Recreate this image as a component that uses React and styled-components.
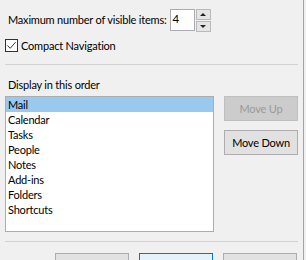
import React from 'react'
import styled, { createGlobalStyle } from 'styled-components'

const GlobalStyle = createGlobalStyle`
    html, body {
        margin: 0;
        padding: 0;
        background: #f0f0f0;
    }
    body {
        font-family: "Segoe UI", Lato, "Noto Sans", sans-serif;
        font-size: 11px;
        letter-spacing: -0.2px;
        color: #000;
    }
`

const items = ['Mail', 'Calendar', 'Tasks', 'People', 'Notes', 'Add-ins', 'Folders', 'Shortcuts']

// Marco del diálogo recortado (borde derecho de la ventana visible)
const Dialog = styled.div`
    width: 303px;
    height: 260px;
    overflow: hidden;
    background: #f0f0f0;
    border-right: 1px solid #a3a3a3;
    display: flex;
    flex-direction: column;
`
const TopRow = styled.div`
    display: flex;
    align-items: center;
    padding: 9px 0 0 8px;
    height: 22px;
`
const Label = styled.span`
    line-height: 16px;
    white-space: nowrap;
`
const SpinBox = styled.div`
    display: flex;
    align-items: center;
    margin-left: 3px;
`
const SpinInput = styled.div`
    width: 21px;
    height: 20px;
    background: #fff;
    border: 1px solid #abadb3;
    padding-left: 2px;
    line-height: 18px;
    font-size: 11.5px;
`
const SpinButtons = styled.div`
    display: flex;
    flex-direction: column;
    gap: 1px;
    margin-left: 1px;
`
const SpinButton = styled.div`
    width: 13px;
    height: 9px;
    background: #e5e5e5;
    border: 1px solid #b9b9b9;
    display: flex;
    align-items: center;
    justify-content: center;
`
const Arrow = styled.span`
    width: 0;
    height: 0;
    border-left: 3px solid transparent;
    border-right: 3px solid transparent;
    ${p => p.$down ? 'border-top: 3px solid #222;' : 'border-bottom: 3px solid #222;'}
`
const CheckRow = styled.label`
    display: flex;
    align-items: center;
    gap: 3px;
    margin: 8px 0 0 5px;
    height: 13px;
`
const CheckBox = styled.span`
    width: 11px;
    height: 11px;
    border: 1px solid #333;
    background: #fff;
    display: flex;
    align-items: center;
    justify-content: center;
`
const Divider = styled.div`
    height: 0;
    border-top: 1px solid #d2d2d2;
    margin: ${p => p.$top}px 5px 0 5px;
`
const SectionLabel = styled.div`
    margin: 12px 0 0 8px;
    line-height: 16px;
`
const ListArea = styled.div`
    display: flex;
    align-items: flex-start;
    gap: 10px;
    margin: 3px 0 0 5px;
`
const ListBox = styled.div`
    width: 207px;
    height: 134px;
    background: #fff;
    border: 1px solid #adadad;
`
const ListItem = styled.div`
    height: 15px;
    line-height: 15px;
    padding-left: 2px;
    background: ${p => p.$selected ? '#99c9ef' : 'transparent'};
`
const ButtonColumn = styled.div`
    display: flex;
    flex-direction: column;
    gap: 9px;
`
const Button = styled.div`
    box-sizing: border-box;
    width: 74px;
    height: 25px;
    display: flex;
    align-items: center;
    justify-content: center;
    background: ${p => p.$disabled ? '#cccccc' : p.$focused ? '#e5f1fb' : '#e1e1e1'};
    border: 1px solid ${p => p.$disabled ? '#bfbfbf' : p.$focused ? '#0078d7' : '#adadad'};
    color: ${p => p.$disabled ? '#9a9a9a' : '#000'};
`
const Footer = styled.div`
    display: flex;
    gap: 10px;
    margin: 11px 0 0 55px;
`

const App = () => (
    <>
        <GlobalStyle />
        <Dialog>
            <TopRow>
                <Label>Maximum number of visible items:</Label>
                <SpinBox>
                    <SpinInput>4</SpinInput>
                    <SpinButtons>
                        <SpinButton><Arrow /></SpinButton>
                        <SpinButton><Arrow $down /></SpinButton>
                    </SpinButtons>
                </SpinBox>
            </TopRow>
            <CheckRow>
                <CheckBox>
                    <svg width="11" height="11" viewBox="0 0 11 11">
                        <path d="M1.5 5.5 L4.2 8.3 L9.6 2.2" fill="none" stroke="#333" strokeWidth="1" />
                    </svg>
                </CheckBox>
                <Label>Compact Navigation</Label>
            </CheckRow>
            <Divider $top={12} />
            <SectionLabel>Display in this order</SectionLabel>
            <ListArea>
                <ListBox>
                    {items.map((it, i) => (
                        <ListItem key={it} $selected={i === 0}>{it}</ListItem>
                    ))}
                </ListBox>
                <ButtonColumn>
                    <Button $disabled>Move Up</Button>
                    <Button>Move Down</Button>
                </ButtonColumn>
            </ListArea>
            <Divider $top={9} />
            {/* Botones inferiores: solo asoma su borde superior en el recorte */}
            <Footer>
                <Button />
                <Button $focused />
                <Button />
            </Footer>
        </Dialog>
    </>
)

export default App
